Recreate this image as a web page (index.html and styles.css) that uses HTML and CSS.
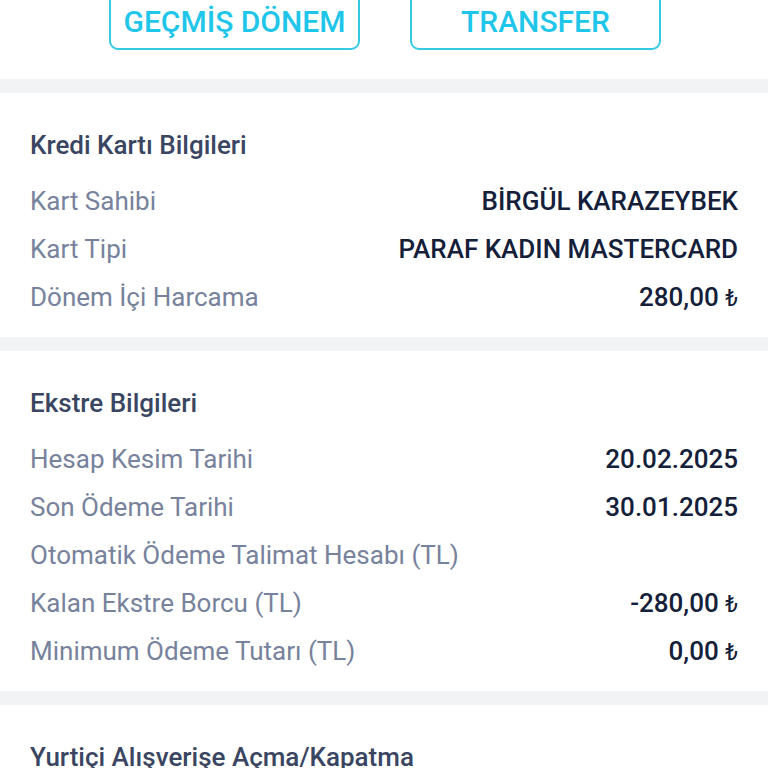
FILE: index.html
```html
<!DOCTYPE html>
<html lang="tr">
<head>
<meta charset="utf-8">
<link rel="stylesheet" href="styles.css">
</head>
<body>
<div class="header">
  <button class="btn">GEÇMİŞ DÖNEM</button>
  <button class="btn">TRANSFER</button>
</div>
<div class="sep"></div>
<section class="card">
  <h2 class="title">Kredi Kartı Bilgileri</h2>
  <div class="rows">
    <div class="row"><span class="label">Kart Sahibi</span><span class="value">BİRGÜL KARAZEYBEK</span></div>
    <div class="row"><span class="label">Kart Tipi</span><span class="value">PARAF KADIN MASTERCARD</span></div>
    <div class="row"><span class="label">Dönem İçi Harcama</span><span class="value">280,00 <span class="tl">₺</span></span></div>
  </div>
</section>
<div class="sep"></div>
<section class="card">
  <h2 class="title">Ekstre Bilgileri</h2>
  <div class="rows">
    <div class="row"><span class="label">Hesap Kesim Tarihi</span><span class="value">20.02.2025</span></div>
    <div class="row"><span class="label">Son Ödeme Tarihi</span><span class="value">30.01.2025</span></div>
    <div class="row"><span class="label">Otomatik Ödeme Talimat Hesabı (TL)</span><span class="value"></span></div>
    <div class="row"><span class="label">Kalan Ekstre Borcu (TL)</span><span class="value">-280,00 <span class="tl">₺</span></span></div>
    <div class="row"><span class="label">Minimum Ödeme Tutarı (TL)</span><span class="value">0,00 <span class="tl">₺</span></span></div>
  </div>
</section>
<div class="sep"></div>
<section class="card">
  <h2 class="title">Yurtiçi Alışverişe Açma/Kapatma</h2>
</section>
</body>
</html>
```
FILE: styles.css
```css
* { box-sizing: border-box; }
html, body { margin: 0; padding: 0; background: #ffffff; }
body {
  font-family: Roboto, "Noto Sans", "DejaVu Sans", sans-serif;
  width: 768px;
  overflow: hidden;
}
.header {
  display: flex;
  gap: 50px;
  padding-left: 109px;
  margin-top: -10px;
  height: 89px;
}
.btn {
  width: 251px;
  height: 60px;
  background: #ffffff;
  border: 2px solid #35c9e3;
  border-radius: 9px;
  color: #1fc6ea;
  font-family: Roboto, sans-serif;
  font-weight: 500;
  font-size: 30px;
  padding: 4px 0 0;
  line-height: 36px;
  cursor: pointer;
}
.sep {
  height: 14px;
  background: #f2f3f5;
}
.card {
  padding: 34px 30px 16px 30px;
}
.title {
  margin: 0;
  font-size: 26px;
  font-weight: 500;
  line-height: 36px;
  color: #3a4561;
}
.rows {
  margin-top: 14px;
  display: flex;
  flex-direction: column;
}
.row {
  display: flex;
  justify-content: space-between;
  align-items: center;
  height: 48px;
}
.label {
  font-size: 26px;
  color: #77829c;
}
.value {
  font-size: 26px;
  font-weight: 500;
  color: #14203a;
}
.tl {
  font-size: 23px;
  font-weight: 400;
}
```
